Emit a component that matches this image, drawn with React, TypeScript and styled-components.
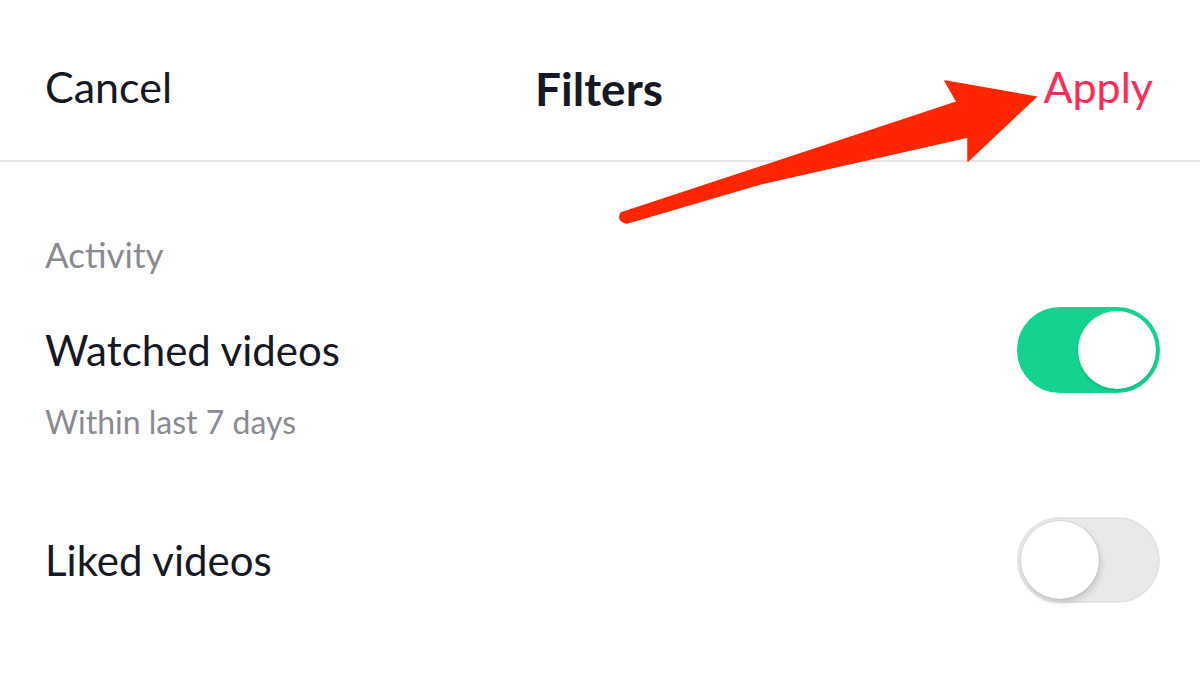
import { FC } from 'react';
import styled, { createGlobalStyle } from 'styled-components';

const GlobalStyle = createGlobalStyle`
  html, body {
    margin: 0;
    padding: 0;
    background: #ffffff;
    font-family: Lato, "Open Sans", "Liberation Sans", sans-serif;
    color: #161823;
  }
`;

export const CSSScreen = styled.main`
  position: relative;
  width: 1200px;
  height: 675px;
  overflow: hidden;
  background: #ffffff;
`;

export const CSSHeader = styled.header`
  display: grid;
  grid-template-columns: 1fr auto 1fr;
  align-items: center;
  height: 162px;
  padding: 14px 47px 0 45px;
  border-bottom: 2px solid #e6e6e8;
  box-sizing: border-box;
`;

export const CSSHeaderButton = styled.span<{ $accent?: boolean; $align?: string }>`
  font-size: 43px;
  line-height: 1.2;
  color: ${({ $accent }) => ($accent ? '#fe2c55' : '#161823')};
  justify-self: ${({ $align }) => $align || 'start'};
`;

export const CSSTitle = styled.h1`
  margin: 4px 0 0;
  font-size: 46px;
  line-height: 1.2;
  font-weight: 700;
  color: #161823;
`;

export const CSSContent = styled.section`
  padding: 71px 40px 0 45px;
`;

export const CSSSectionLabel = styled.h2`
  margin: 0 0 32px;
  font-size: 35px;
  line-height: 42px;
  font-weight: 400;
  color: #8a8b91;
`;

export const CSSSetting = styled.div<{ $gap?: number }>`
  margin-bottom: ${({ $gap }) => $gap ?? 0}px;
`;

export const CSSRow = styled.div`
  display: flex;
  justify-content: space-between;
  align-items: center;
  height: 86px;
`;

export const CSSRowTitle = styled.span`
  font-size: 42px;
  line-height: 1.2;
  color: #161823;
`;

export const CSSRowHint = styled.p`
  margin: 10px 0 0;
  font-size: 32px;
  line-height: 38px;
  color: #8a8b91;
`;

export const CSSToggle = styled.span<{ $on: boolean }>`
  position: relative;
  display: inline-block;
  width: 143px;
  height: 86px;
  border-radius: 43px;
  box-sizing: border-box;
  background: ${({ $on }) => ($on ? '#13d38e' : '#e9e9eb')};
  border: 2px solid ${({ $on }) => ($on ? '#13d38e' : '#e4e4e6')};

  &::after {
    content: '';
    position: absolute;
    top: 2px;
    left: ${({ $on }) => ($on ? '59px' : '2px')};
    width: 78px;
    height: 78px;
    border-radius: 50%;
    background: #ffffff;
    box-shadow: ${({ $on }) =>
      $on
        ? '0 2px 3px rgba(0, 0, 0, 0.12)'
        : '0 0 0 1px rgba(0, 0, 0, 0.06), 2px 4px 6px rgba(0, 0, 0, 0.14)'};
  }
`;

export const CSSArrow = styled.svg`
  position: absolute;
  inset: 0;
  pointer-events: none;
`;

const App: FC = () => {
  return (
    <CSSScreen>
      <GlobalStyle />
      <CSSHeader>
        <CSSHeaderButton>Cancel</CSSHeaderButton>
        <CSSTitle>Filters</CSSTitle>
        <CSSHeaderButton $accent $align="end">
          Apply
        </CSSHeaderButton>
      </CSSHeader>
      <CSSContent>
        <CSSSectionLabel>Activity</CSSSectionLabel>
        <CSSSetting $gap={76}>
          <CSSRow>
            <CSSRowTitle>Watched videos</CSSRowTitle>
            <CSSToggle $on />
          </CSSRow>
          <CSSRowHint>Within last 7 days</CSSRowHint>
        </CSSSetting>
        <CSSSetting>
          <CSSRow>
            <CSSRowTitle>Liked videos</CSSRowTitle>
            <CSSToggle $on={false} />
          </CSSRow>
        </CSSSetting>
      </CSSContent>
      <CSSArrow width="1200" height="675" viewBox="0 0 1200 675">
        <path
          d="M621 213 L957 102 L945 81 L1036 97 L968 161 L968 137 L760 184 L627 223 Q617 221 621 213 Z"
          fill="#ff2600"
          stroke="#ff2600"
          strokeWidth="1.5"
          strokeLinejoin="round"
        />
      </CSSArrow>
    </CSSScreen>
  );
};

export default App;
